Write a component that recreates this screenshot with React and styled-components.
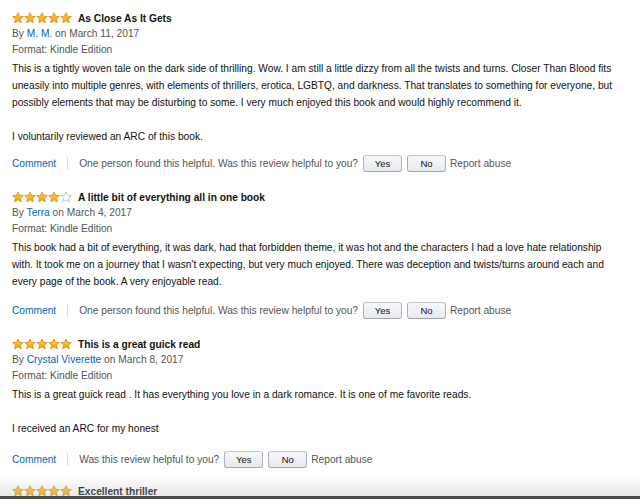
import React from "react";
import styled, { createGlobalStyle } from "styled-components";

const Global = createGlobalStyle`
  html, body { margin: 0; padding: 0; background: #fff; }
  body { height: 499px; overflow: hidden; font-family: "Liberation Sans", Arial, sans-serif; }
`;

const Page = styled.div`
  padding: 10px 12px 0 12px;
  display: flex;
  flex-direction: column;
`;

const Review = styled.div`
  display: flex;
  flex-direction: column;
  margin-bottom: ${(p) => p.$after}px;
`;

const Header = styled.div`
  display: flex;
  align-items: center;
  height: 16px;
  gap: 6px;
`;

const StarRow = styled.div`
  display: flex;
  width: 60px;
`;

const Title = styled.span`
  font-size: 10.2px;
  font-weight: bold;
  color: #111;
`;

const Meta = styled.div`
  font-size: 10.2px;
  line-height: 15.5px;
  color: #555;
`;

const Link = styled.a`
  color: #0066c0;
  text-decoration: none;
`;

const Body = styled.div`
  margin-top: 3px;
  font-size: 10.2px;
  line-height: 17px;
  color: #111;
  display: flex;
  flex-direction: column;
  gap: 17px;
  padding-right: 4px;
  p { margin: 0; }
`;

const Actions = styled.div`
  display: flex;
  align-items: center;
  height: 20px;
  margin-top: ${(p) => p.$top}px;
  font-size: 10.2px;
  color: #555;
`;

const Sep = styled.span`
  width: 1px;
  height: 13px;
  background: #ddd;
  margin: 0 11px 0 11px;
`;

const Btn = styled.button`
  font-family: "Liberation Sans", Arial, sans-serif;
  font-size: 9.5px;
  color: #111;
  width: 39px;
  height: 17px;
  padding: 0;
  margin-left: 5px;
  border: 1px solid #adb1b8;
  border-top-color: #c4c7cc;
  border-bottom-color: #a2a6ac;
  border-radius: 3px;
  background: linear-gradient(#f7f8fa, #e7e9ec);
  display: inline-flex;
  align-items: center;
  justify-content: center;
`;

const Report = styled.span`
  margin-left: 4px;
`;

const BottomShade = styled.div`
  position: fixed;
  left: 0;
  right: 0;
  bottom: 0;
  height: 22px;
  background: linear-gradient(rgba(200,200,200,0), rgba(190,190,190,0.35));
  border-bottom: 3px solid #4a4a4a;
  pointer-events: none;
`;

const starPath =
  "M6 0.8 L7.55 4.25 L11.3 4.6 L8.45 7.1 L9.3 10.8 L6 8.85 L2.7 10.8 L3.55 7.1 L0.7 4.6 L4.45 4.25 Z";

function Star({ filled }) {
  return (
    <svg width="12" height="12" viewBox="0 0 12 12">
      <defs>
        <linearGradient id="sg" x1="0" y1="0" x2="0" y2="1">
          <stop offset="0" stopColor="#ffd23f" />
          <stop offset="1" stopColor="#f3a10f" />
        </linearGradient>
      </defs>
      <path
        d={starPath}
        fill={filled ? "url(#sg)" : "#fff"}
        stroke={filled ? "#d98b12" : "#b9b9b9"}
        strokeWidth="0.8"
        strokeLinejoin="round"
      />
    </svg>
  );
}

function Stars({ n }) {
  return (
    <StarRow>
      {[0, 1, 2, 3, 4].map((i) => (
        <Star key={i} filled={i < n} />
      ))}
    </StarRow>
  );
}

const reviews = [
  {
    stars: 5,
    title: "As Close As It Gets",
    author: "M. M.",
    date: "March 11, 2017",
    paras: [
      "This is a tightly woven tale on the dark side of thrilling. Wow. I am still a little dizzy from all the twists and turns. Closer Than Blood fits uneasily into multiple genres, with elements of thrillers, erotica, LGBTQ, and darkness. That translates to something for everyone, but possibly elements that may be disturbing to some. I very much enjoyed this book and would highly recommend it.",
      "I voluntarily reviewed an ARC of this book.",
    ],
    helpful: "One person found this helpful. Was this review helpful to you?",
    actTop: 8,
    after: 16,
  },
  {
    stars: 4,
    title: "A little bit of everything all in one book",
    author: "Terra",
    date: "March 4, 2017",
    paras: [
      "This book had a bit of everything, it was dark, had that forbidden theme, it was hot and the characters I had a love hate relationship with. It took me on a journey that I wasn't expecting, but very much enjoyed. There was deception and twists/turns around each and every page of the book. A very enjoyable read.",
    ],
    helpful: "One person found this helpful. Was this review helpful to you?",
    actTop: 10,
    after: 16,
  },
  {
    stars: 5,
    title: "This is a great guick read",
    author: "Crystal Viverette",
    date: "March 8, 2017",
    paras: [
      "This is a great guick read . It has everything you love in a dark romance. It is one of me favorite reads.",
      "I received an ARC for my honest",
    ],
    helpful: "Was this review helpful to you?",
    actTop: 12,
    after: 14,
  },
];

export default function App() {
  return (
    <>
      <Global />
      <Page>
        {reviews.map((r, i) => (
          <Review key={i} $after={r.after}>
            <Header>
              <Stars n={r.stars} />
              <Title>{r.title}</Title>
            </Header>
            <Meta>
              By <Link href="#">{r.author}</Link> on {r.date}
            </Meta>
            <Meta>Format: Kindle Edition</Meta>
            <Body>
              {r.paras.map((p, j) => (
                <p key={j}>{p}</p>
              ))}
            </Body>
            <Actions $top={r.actTop}>
              <Link href="#">Comment</Link>
              <Sep />
              <span>{r.helpful}</span>
              <Btn>Yes</Btn>
              <Btn>No</Btn>
              <Report>Report abuse</Report>
            </Actions>
          </Review>
        ))}
        <Review $after={0}>
          <Header>
            <Stars n={5} />
            <Title>Excellent thriller</Title>
          </Header>
        </Review>
      </Page>
      <BottomShade />
    </>
  );
}
